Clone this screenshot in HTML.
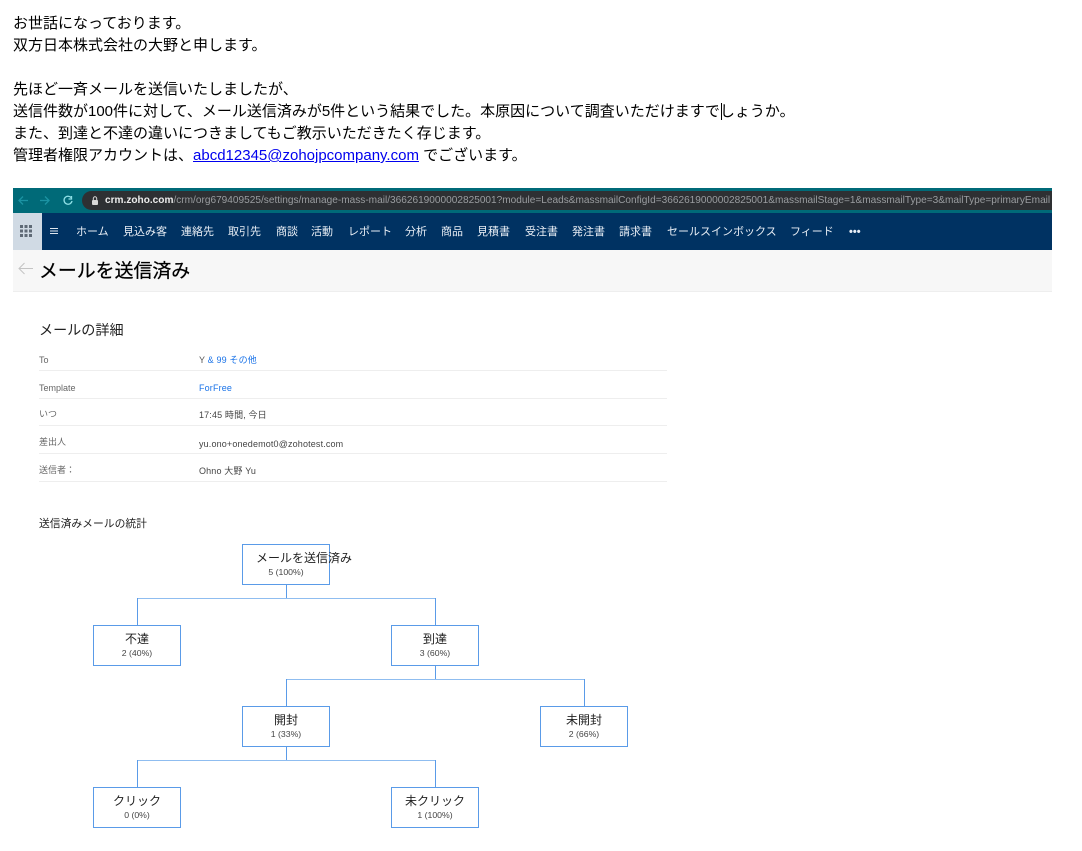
<!DOCTYPE html>
<html lang="ja">
<head>
<meta charset="utf-8">
<style>
html,body{margin:0;padding:0;background:#fff;}
body{width:1082px;height:851px;position:relative;overflow:hidden;font-family:"Liberation Sans","WenQuanYi Zen Hei","Noto Sans CJK JP",sans-serif;color:#000;}
.a{position:absolute;white-space:nowrap;}
#mail{left:13px;top:13px;font-size:15px;line-height:22px;font-family:"Liberation Sans","Noto Sans CJK JP",sans-serif;}
#mail div{height:22px;overflow:visible;}
#mail a{color:#0000ee;text-decoration:underline;}
#shot{position:absolute;left:0;top:0;width:1082px;height:851px;filter:blur(.3px);}
.nav{position:absolute;top:225px;font-size:11px;line-height:14px;color:#e8eef5;white-space:nowrap;}
.l{font-size:9px;color:#666;left:39px;line-height:12px;}
.v{font-size:9px;color:#444;left:199px;line-height:12px;letter-spacing:.15px;}
.rule{position:absolute;left:39px;width:628px;height:1px;background:#eeeeee;}
.box{position:absolute;width:86px;height:39px;border:1px solid #5a9be8;background:#fff;text-align:center;}
.box b{display:block;font-weight:normal;font-size:12px;line-height:14px;margin-top:6px;color:#222;white-space:nowrap;}
.box i{display:block;font-style:normal;font-size:8.700px;line-height:12px;margin-top:1px;color:#444;white-space:nowrap;}
.h{position:absolute;height:1px;background:#8fbdf0;}
.w{position:absolute;width:1px;background:#5a9be8;}
</style>
</head>
<body>
<div class="a" id="mail"><div>お世話になっております。</div><div>双方日本株式会社の大野と申します。</div><div></div><div>先ほど一斉メールを送信いたしましたが、</div><div>送信件数が100件に対して、メール送信済みが5件という結果でした。本原因について調査いただけますでしょうか。</div><div>また、到達と不達の違いにつきましてもご教示いただきたく存じます。</div><div>管理者権限アカウントは、<a>abcd12345@zohojpcompany.com</a> でございます。</div></div>
<div class="a" style="left:721px;top:103px;width:1px;height:17px;background:#000;"></div>

<div id="shot">
<div class="a" style="left:13px;top:188px;width:1039px;height:25px;background:#006a78;"></div>
<div class="a" style="left:82px;top:191px;width:970px;height:19px;background:#2e3033;border-radius:10px 0 0 10px;"></div>
<svg class="a" style="left:13px;top:188px;" width="75" height="25" viewBox="0 0 75 25" fill="none">
<path d="M15 12.500H6M10 8.500l-4 4 4 4" stroke="#1b93a3" stroke-width="1.300"/>
<path d="M27 12.500h9M32 8.500l4 4-4 4" stroke="#1b93a3" stroke-width="1.300"/>
<path d="M58 9.500a4 4 0 1 0 1 3.500M58.500 8v3h-3" stroke="#8fe0e6" stroke-width="1.300"/>
</svg>
<svg class="a" style="left:90px;top:195px;" width="10" height="11" viewBox="0 0 10 11"><rect x="2" y="5" width="6" height="5" rx="1" fill="#d8d8d8"/><path d="M3.300 5V3.500a1.700 1.700 0 0 1 3.400 0V5" fill="none" stroke="#d8d8d8"/></svg>
<div class="a" style="left:105px;top:194px;width:946px;overflow:hidden;font-size:10.100px;line-height:14px;color:#9a9da0;"><span style="color:#ececec;font-weight:bold;">crm.zoho.com</span>/crm/org679409525/settings/manage-mass-mail/3662619000002825001?module=Leads&amp;massmailConfigId=3662619000002825001&amp;massmailStage=1&amp;massmailType=3&amp;mailType=primaryEmail</div>

<div class="a" style="left:13px;top:213px;width:1039px;height:37px;background:#003262;"></div>
<div class="a" style="left:13px;top:213px;width:29px;height:37px;background:#d0dae4;"></div>
<svg class="a" style="left:20px;top:225px;" width="12" height="12" viewBox="0 0 12 12" fill="#5f6a76">
<rect x="0" y="0" width="3" height="3"/><rect x="4.500" y="0" width="3" height="3"/><rect x="9" y="0" width="3" height="3"/>
<rect x="0" y="4.500" width="3" height="3"/><rect x="4.500" y="4.500" width="3" height="3"/><rect x="9" y="4.500" width="3" height="3"/>
<rect x="0" y="9" width="3" height="3"/><rect x="4.500" y="9" width="3" height="3"/><rect x="9" y="9" width="3" height="3"/>
</svg>
<svg class="a" style="left:50px;top:227px;" width="8" height="8" viewBox="0 0 8 8" stroke="#dfe6ee" stroke-width="1"><path d="M0 1.500h8M0 4h8M0 6.500h8"/></svg>
<span class="nav" style="left:76px;">ホーム</span>
<span class="nav" style="left:123px;">見込み客</span>
<span class="nav" style="left:181px;">連絡先</span>
<span class="nav" style="left:228px;">取引先</span>
<span class="nav" style="left:276px;">商談</span>
<span class="nav" style="left:311px;">活動</span>
<span class="nav" style="left:348px;">レポート</span>
<span class="nav" style="left:405px;">分析</span>
<span class="nav" style="left:441px;">商品</span>
<span class="nav" style="left:477px;">見積書</span>
<span class="nav" style="left:525px;">受注書</span>
<span class="nav" style="left:572px;">発注書</span>
<span class="nav" style="left:619px;">請求書</span>
<span class="nav" style="left:667px;">セールスインボックス</span>
<span class="nav" style="left:790px;">フィード</span>
<span class="nav" style="left:849px;font-weight:bold;">•••</span>

<div class="a" style="left:13px;top:250px;width:1039px;height:41px;background:#f7f7f7;border-bottom:1px solid #eeeeee;"></div>
<svg class="a" style="left:18px;top:262px;" width="16" height="13" viewBox="0 0 16 13" fill="none" stroke="#c4c4c4" stroke-width="1"><path d="M15 6.500H1M6.500 1L1 6.500 6.500 12"/></svg>
<div class="a" style="left:39px;top:260px;font-size:18.900px;line-height:24px;color:#000;-webkit-text-stroke:.25px #000;">メールを送信済み</div>

<div class="a" style="left:39px;top:321px;font-size:14.100px;line-height:18px;color:#222;">メールの詳細</div>
<div class="a l" style="top:354px;">To</div><div class="a v" style="top:354px;color:#555;">Y <span style="color:#1a73e8;">&amp; 99 その他</span></div>
<div class="rule" style="top:370px;"></div>
<div class="a l" style="top:382px;">Template</div><div class="a v" style="top:382px;color:#1a73e8;">ForFree</div>
<div class="rule" style="top:398px;"></div>
<div class="a l" style="top:408px;">いつ</div><div class="a v" style="top:409px;">17:45 時間, 今日</div>
<div class="rule" style="top:425px;"></div>
<div class="a l" style="top:436px;">差出人</div><div class="a v" style="top:438px;">yu.ono+onedemot0@zohotest.com</div>
<div class="rule" style="top:453px;"></div>
<div class="a l" style="top:464px;">送信者：</div><div class="a v" style="top:465px;">Ohno 大野 Yu</div>
<div class="rule" style="top:481px;"></div>

<div class="a" style="left:39px;top:517px;font-size:10.800px;line-height:14px;color:#222;">送信済みメールの統計</div>

<div class="w" style="left:286px;top:584px;height:15px;"></div>
<div class="h" style="left:137px;top:598px;width:299px;"></div>
<div class="w" style="left:137px;top:598px;height:28px;"></div>
<div class="w" style="left:435px;top:598px;height:28px;"></div>
<div class="w" style="left:435px;top:665px;height:15px;"></div>
<div class="h" style="left:286px;top:679px;width:299px;"></div>
<div class="w" style="left:286px;top:679px;height:28px;"></div>
<div class="w" style="left:584px;top:679px;height:28px;"></div>
<div class="w" style="left:286px;top:746px;height:15px;"></div>
<div class="h" style="left:137px;top:760px;width:299px;"></div>
<div class="w" style="left:137px;top:760px;height:28px;"></div>
<div class="w" style="left:435px;top:760px;height:28px;"></div>

<div class="box" style="left:242px;top:544px;"><b style="width:96px;margin-left:13px;text-align:left;">メールを送信済み</b><i>5 (100%)</i></div>
<div class="box" style="left:93px;top:625px;"><b>不達</b><i>2 (40%)</i></div>
<div class="box" style="left:391px;top:625px;"><b>到達</b><i>3 (60%)</i></div>
<div class="box" style="left:242px;top:706px;"><b>開封</b><i>1 (33%)</i></div>
<div class="box" style="left:540px;top:706px;"><b>未開封</b><i>2 (66%)</i></div>
<div class="box" style="left:93px;top:787px;"><b>クリック</b><i>0 (0%)</i></div>
<div class="box" style="left:391px;top:787px;"><b>未クリック</b><i>1 (100%)</i></div>
</div>
</body>
</html>
